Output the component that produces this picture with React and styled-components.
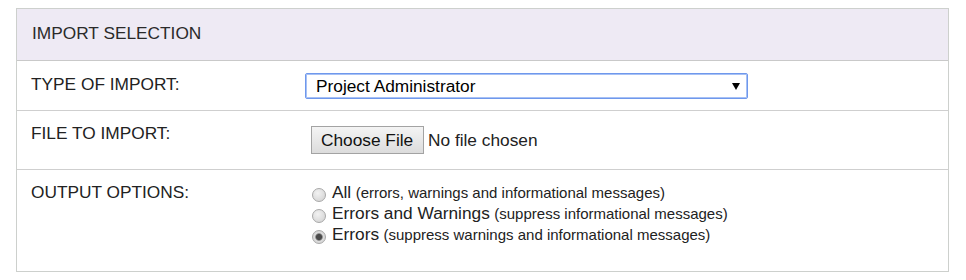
import React from "react";
import styled, { createGlobalStyle } from "styled-components";

const Global = createGlobalStyle`
  html, body { margin: 0; padding: 0; background: #fff; }
  body { font-family: "Liberation Sans", Arial, sans-serif; color: #222; }
`;

const Page = styled.div`
  padding: 8px 17px 0 16px;
`;

const Panel = styled.div`
  border: 1px solid #cdd0cd;
`;

const Header = styled.div`
  background: #eeeaf4;
  padding: 14px 15px 17px;
  font-size: 17.3px;
  line-height: 20px;
  color: #2a2a2a;
  border-bottom: 1px solid #c9c9c9;
`;

const Row = styled.div`
  display: grid;
  grid-template-columns: 288px 1fr;
  border-bottom: ${(p) => (p.$last ? "none" : "1px solid #cfcfcf")};
`;

const Label = styled.div`
  padding: ${(p) => p.$pt}px 14px 0;
  font-size: 17.3px;
  line-height: 20px;
  color: #222;
`;

const Value = styled.div`
  padding: ${(p) => p.$pt}px 0 ${(p) => p.$pb}px;
`;

const SelectWrap = styled.div`
  position: relative;
  width: 443px;
  height: 26px;
`;

const Select = styled.select`
  appearance: none;
  -webkit-appearance: none;
  box-sizing: border-box;
  width: 100%;
  height: 26px;
  margin: 0;
  padding: 0 0 0 10px;
  border: 1px solid #6f98ec;
  box-shadow: inset 0 0 0 1px #a7c1f5;
  border-radius: 2px;
  background: #fff;
  font-family: "Liberation Sans", Arial, sans-serif;
  font-size: 17.3px;
  color: #000;
  outline: none;
`;

const Arrow = styled.span`
  position: absolute;
  right: 8px;
  top: 10px;
  width: 0;
  height: 0;
  border-left: 4px solid transparent;
  border-right: 4px solid transparent;
  border-top: 7px solid #000;
  pointer-events: none;
`;

const FileRow = styled.div`
  display: flex;
  align-items: center;
  margin-left: 6px;
`;

const HiddenInput = styled.input`
  display: none;
`;

const FileButton = styled.label`
  box-sizing: border-box;
  display: inline-flex;
  align-items: center;
  height: 28px;
  width: 113px;
  padding: 0 0 0 9px;
  border: 1px solid #a3a3a3;
  background: linear-gradient(#f4f4f4, #dcdcdc);
  font-size: 17.3px;
  color: #111;
  cursor: default;
`;

const FileName = styled.span`
  margin-left: 4px;
  font-size: 17.3px;
  color: #222;
`;

const Options = styled.div`
  margin-left: 7px;
`;

const Option = styled.label`
  display: block;
  line-height: 21px;
  height: 21px;
  white-space: nowrap;
  color: #222;
`;

const Radio = styled.input`
  appearance: none;
  -webkit-appearance: none;
  display: inline-block;
  box-sizing: border-box;
  width: 14px;
  height: 14px;
  margin: 0 6px 0 0;
  vertical-align: -4px;
  border-radius: 50%;
  border: 1px solid #a8a8a8;
  background: radial-gradient(circle at 40% 35%, #f2f2f2 0%, #dadada 70%, #cfcfcf 100%);
  &:checked {
    background: radial-gradient(circle, #4a4a4a 0 2.6px, #8a8a8a 3.4px, #dcdcdc 4.2px, #cfcfcf 100%);
  }
`;

const Main = styled.span`
  font-size: 17.3px;
`;

const Note = styled.span`
  font-size: 15px;
`;

const options = [
  { main: "All", note: "(errors, warnings and informational messages)" },
  { main: "Errors and Warnings", note: "(suppress informational messages)" },
  { main: "Errors", note: "(suppress warnings and informational messages)", checked: true },
];

export default function App() {
  return (
    <Page>
      <Global />
      <Panel>
        <Header>IMPORT SELECTION</Header>
        <Row>
          <Label $pt={13}>TYPE OF IMPORT:</Label>
          <Value $pt={12} $pb={11}>
            <SelectWrap>
              <Select defaultValue="pa">
                <option value="pa">Project Administrator</option>
              </Select>
              <Arrow />
            </SelectWrap>
          </Value>
        </Row>
        <Row>
          <Label $pt={12}>FILE TO IMPORT:</Label>
          <Value $pt={15} $pb={15}>
            <FileRow>
              <FileButton>
                Choose File
                <HiddenInput type="file" />
              </FileButton>
              <FileName>No file chosen</FileName>
            </FileRow>
          </Value>
        </Row>
        <Row $last>
          <Label $pt={12}>OUTPUT OPTIONS:</Label>
          <Value $pt={12} $pb={26}>
            <Options>
              {options.map((o) => (
                <Option key={o.main}>
                  <Radio type="radio" name="output" defaultChecked={!!o.checked} />
                  <Main>{o.main}</Main> <Note>{o.note}</Note>
                </Option>
              ))}
            </Options>
          </Value>
        </Row>
      </Panel>
    </Page>
  );
}
